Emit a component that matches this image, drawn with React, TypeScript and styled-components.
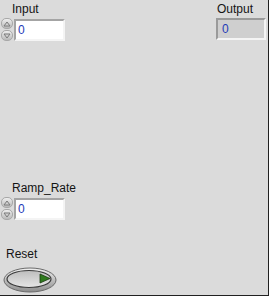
import React from 'react';
import styled, { createGlobalStyle } from 'styled-components';

const GlobalStyle = createGlobalStyle`
  html, body {
    margin: 0;
    padding: 0;
    background: #dbdbdb;
  }
`;

const Panel = styled.div`
  width: 269px;
  height: 296px;
  box-sizing: border-box;
  background: #dbdbdb;
  border-right: 1px solid #202020;
  border-bottom: 1px solid #202020;
  padding-top: 3px;
  display: flex;
  flex-direction: column;
  font-family: 'Liberation Sans', Arial, sans-serif;
  font-size: 12px;
  overflow: hidden;
`;

const TopRow = styled.div`
  display: flex;
  justify-content: space-between;
  align-items: flex-start;
`;

const Control = styled.div<{ $top?: number; $left?: number; $right?: number }>`
  display: flex;
  flex-direction: column;
  margin-top: ${(p) => p.$top ?? 0}px;
  margin-left: ${(p) => p.$left ?? 0}px;
  margin-right: ${(p) => p.$right ?? 0}px;
`;

const Label = styled.div<{ $indent?: number }>`
  height: 14px;
  line-height: 13px;
  margin-left: ${(p) => p.$indent ?? 0}px;
  color: #141414;
  white-space: nowrap;
`;

const NumRow = styled.div`
  display: flex;
  align-items: center;
  margin-top: 1px;
`;

const Spinner = styled.div`
  width: 12px;
  height: 23px;
  display: flex;
  flex-direction: column;
  gap: 1px;
`;

const SpinButton = styled.div`
  flex: 1;
  border-radius: 5px;
  background: linear-gradient(#eeeeee, #b9b9b9);
  border: 1px solid #a8a8a8;
  box-sizing: border-box;
  display: flex;
  align-items: center;
  justify-content: center;
`;

const NumField = styled.div<{ $indicator?: boolean }>`
  width: ${(p) => (p.$indicator ? 50 : 51)}px;
  height: 22px;
  box-sizing: border-box;
  margin-left: ${(p) => (p.$indicator ? 0 : 1)}px;
  background: ${(p) => (p.$indicator ? '#cfcfcf' : '#ffffff')};
  border-top: 2px solid ${(p) => (p.$indicator ? '#9a9a9a' : '#a4a4a4')};
  border-left: 2px solid ${(p) => (p.$indicator ? '#9a9a9a' : '#a4a4a4')};
  border-right: 2px solid #f4f4f4;
  border-bottom: 2px solid #f4f4f4;
  padding-left: ${(p) => (p.$indicator ? 4 : 2)}px;
  line-height: 18px;
  color: #1f3cb8;
`;

const ResetButton = styled.div`
  width: 54px;
  height: 27px;
  margin-left: 3px;
  margin-top: 4px;
`;

const Arrow = ({ up }: { up?: boolean }) => (
  <svg width="8" height="6" viewBox="0 0 8 6">
    <path
      d={up ? 'M1 5 L4 1 L7 5 Z' : 'M1 1 L4 5 L7 1 Z'}
      fill="#d0d0d0"
      stroke="#7a7a7a"
      strokeWidth="1"
    />
  </svg>
);

const Numeric: React.FC<{ value: string }> = ({ value }) => (
  <NumRow>
    <Spinner>
      <SpinButton><Arrow up /></SpinButton>
      <SpinButton><Arrow /></SpinButton>
    </Spinner>
    <NumField>{value}</NumField>
  </NumRow>
);

const App: React.FC = () => {
  return (
    <>
      <GlobalStyle />
      <Panel>
        <TopRow>
          <Control $left={1}>
            <Label $indent={11}>Input</Label>
            <Numeric value="0" />
          </Control>
          <Control $right={2}>
            <Label $indent={1}>Output</Label>
            <NumRow>
              <NumField $indicator>0</NumField>
            </NumRow>
          </Control>
        </TopRow>

        <Control $top={141} $left={1}>
          <Label $indent={11}>Ramp_Rate</Label>
          <Numeric value="0" />
        </Control>

        <Control $top={28} $left={6}>
          <Label>Reset</Label>
        </Control>
        <ResetButton>
          <svg width="54" height="27" viewBox="0 0 54 27">
            <defs>
              <linearGradient id="rimG" x1="0" y1="0" x2="0" y2="1">
                <stop offset="0" stopColor="#f2f2f2" />
                <stop offset="1" stopColor="#8c8c8c" />
              </linearGradient>
              <linearGradient id="faceG" x1="0" y1="0" x2="0" y2="1">
                <stop offset="0" stopColor="#bdbdbd" />
                <stop offset="1" stopColor="#e6e6e6" />
              </linearGradient>
            </defs>
            <ellipse cx="27" cy="14" rx="26" ry="12" fill="url(#rimG)" stroke="#6a6a6a" strokeWidth="1" />
            <ellipse cx="26" cy="13" rx="22" ry="8.5" fill="url(#faceG)" stroke="#3a3a3a" strokeWidth="1.2" />
            <path d="M37 8 L47 12.5 L37 17 Z" fill="#2f7a1e" stroke="#1a3a10" strokeWidth="0.8" />
          </svg>
        </ResetButton>
      </Panel>
    </>
  );
};

export default App;
